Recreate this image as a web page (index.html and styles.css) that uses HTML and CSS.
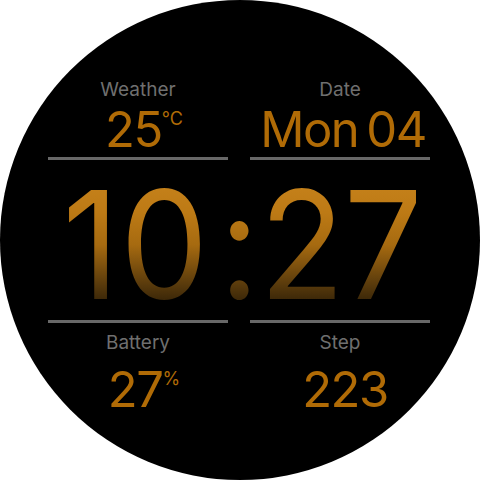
FILE: index.html
```html
<!DOCTYPE html>
<html>
<head>
<meta charset="utf-8">
<link rel="stylesheet" href="styles.css">
</head>
<body>
<div class="face">
  <div class="row top">
    <div class="cell">
      <div class="label">Weather</div>
      <div class="value withunit"><span>25</span><sup class="unit">°C</sup></div>
      <div class="rule"></div>
    </div>
    <div class="cell">
      <div class="label">Date</div>
      <div class="value date"><span>Mon</span><span class="gap">04</span></div>
      <div class="rule"></div>
    </div>
  </div>
  <div class="time"><span class="digits first">10</span><span class="colon">:</span><span class="digits">27</span></div>
  <div class="row bottom">
    <div class="cell">
      <div class="rule"></div>
      <div class="label">Battery</div>
      <div class="value withunit"><span>27</span><sup class="unit">%</sup></div>
    </div>
    <div class="cell">
      <div class="rule"></div>
      <div class="label">Step</div>
      <div class="value steps"><span>223</span></div>
    </div>
  </div>
</div>
</body>
</html>
```
FILE: styles.css
```css
html, body {
  margin: 0;
  padding: 0;
  background: #ffffff;
}
.face {
  width: 480px;
  height: 480px;
  border-radius: 50%;
  background: #000;
  display: flex;
  flex-direction: column;
  align-items: center;
  font-family: Inter, "Noto Sans", sans-serif;
  box-sizing: border-box;
  padding-top: 80px;
}
.row {
  display: flex;
  gap: 22px;
  width: 382px;
  margin-left: -2px;
}
.cell {
  width: 180px;
  display: flex;
  flex-direction: column;
  align-items: center;
}
.label {
  font-size: 19px;
  line-height: 19px;
  color: #6f6f6f;
}
.value {
  font-size: 49px;
  line-height: 49px;
  color: #b06b06;
  display: flex;
  align-items: flex-start;
  margin-top: 6px;
  letter-spacing: -1.5px;
}
.withunit {
  padding-left: 12px;
}
.date {
  padding-left: 6px;
}
.steps {
  padding-left: 10px;
}
.unit {
  font-size: 18px;
  line-height: 18px;
  letter-spacing: 0;
  margin-left: 0;
  margin-top: 5px;
}
.gap {
  margin-left: 8px;
}
.rule {
  width: 180px;
  height: 3px;
  background: #686868;
  margin-top: 3px;
}
.time {
  display: flex;
  font-size: 150px;
  line-height: 130px;
  margin-top: 20px;
  margin-left: 4px;
  transform: scaleX(0.93);
  background: linear-gradient(to bottom, #c6821b 0%, #bd7a15 25%, #a66a10 50%, #5a3b0c 80%, #2a1c06 100%);
  -webkit-background-clip: text;
  background-clip: text;
  color: transparent;
}
.digits {
  letter-spacing: -1px;
}
.digits.first {
  letter-spacing: 1px;
}
.colon {
  margin: 0 0 0 11px;
}
.bottom {
  margin-top: 7px;
}
.bottom .label {
  margin-top: 10px;
}
.bottom .value {
  margin-top: 13px;
}
```
